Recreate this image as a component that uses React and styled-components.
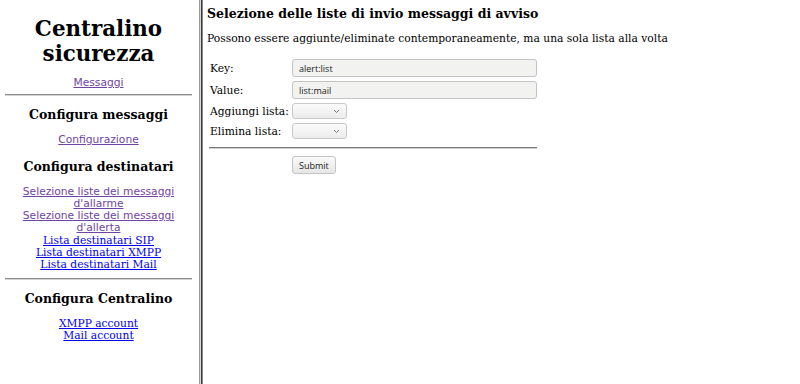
import React from 'react';
import styled, {createGlobalStyle} from 'styled-components';

const GlobalStyle = createGlobalStyle`
    html, body {
        margin: 0;
        height: 100%;
        background: #fff;
    }
    body {
        font-family: "DejaVu Serif", "Liberation Serif", serif;
        font-size: 10.7px;
        color: #000;
    }
`;

const Page = styled.div`
    display: flex;
    height: 384px;
    overflow: hidden;
`;

const Sidebar = styled.nav`
    width: 198px;
    flex: none;
    box-sizing: border-box;
    padding: 0 6px 0 5px;
    text-align: center;
`;

const FrameBorder = styled.div`
    width: 6px;
    flex: none;
    background: linear-gradient(
        to right,
        #ffffff 0 1px,
        #9a9a9a 1px 2px,
        #d8d8d8 2px 3px,
        #3a3a3a 3px 4px,
        #8a8a8a 4px 5px,
        #ffffff 5px 6px
    );
`;

const Title = styled.h1`
    margin: 16px 0 11px;
    font-family: "DejaVu Serif", "Liberation Serif", serif;
    font-size: 21.4px;
    line-height: 25px;
    font-weight: bold;
`;

const SectionTitle = styled.h3`
    margin: ${({$top}) => $top || 12}px 0 12px;
    font-size: 12.5px;
    line-height: 15px;
    font-weight: bold;
`;

const LinkList = styled.div`
    display: flex;
    flex-direction: column;
    align-items: center;
    line-height: 12.3px;
`;

const NavLink = styled.a`
    color: ${({$visited}) => ($visited ? '#6e45a3' : '#0000ee')};
    font-family: ${({$visited}) => ($visited ? '"DejaVu Sans", sans-serif' : '"DejaVu Serif", serif')};
    text-decoration: underline;
    cursor: pointer;
`;

const Rule = styled.hr`
    margin: ${({$top}) => $top || 6}px 0 0;
    border: none;
    border-top: 1px solid #8c8c8c;
    border-bottom: 1px solid #d4d4d4;
    height: 0;
`;

const Main = styled.main`
    flex: 1;
    padding: 0 0 0 3px;
`;

const Heading = styled.h3`
    margin: 6px 0 0;
    font-size: 12.5px;
    line-height: 15px;
    font-weight: bold;
`;

const Intro = styled.p`
    margin: 11px 0 0;
    line-height: 13px;
`;

const Form = styled.form`
    display: grid;
    grid-template-columns: 83px 245px;
    row-gap: 4px;
    align-items: center;
    margin: 14px 0 0 2px;
    width: 330px;
`;

const Label = styled.label`
    padding-left: 1px;
    line-height: 13px;
`;

const TextInput = styled.input`
    box-sizing: border-box;
    height: 18px;
    width: 245px;
    padding: 0 6px;
    border: 1px solid #c4c4c4;
    border-radius: 3px;
    background: #f2f2f1;
    font-family: "Open Sans", sans-serif;
    font-size: 9px;
    color: #222;
`;

const SelectBox = styled.div`
    box-sizing: border-box;
    height: 16px;
    width: 55px;
    border: 1px solid #c8c8c8;
    border-radius: 3px;
    background: linear-gradient(#fbfbfb, #ececec);
    display: flex;
    align-items: center;
    justify-content: flex-end;
    padding-right: 6px;
`;

const Separator = styled.div`
    grid-column: 1 / span 2;
    height: 0;
    border-top: 1px solid #7a7a7a;
    border-bottom: 1px solid #cfcfcf;
    margin: 4px 0 3px;
`;

const Submit = styled.button`
    grid-column: 2;
    justify-self: start;
    box-sizing: border-box;
    height: 18px;
    padding: 0 6px;
    border: 1px solid #c4c4c4;
    border-radius: 3px;
    background: linear-gradient(#fafafa, #e6e6e6);
    font-family: "Open Sans", sans-serif;
    font-size: 9px;
    color: #222;
`;

const Chevron = () => (
    <svg width="7" height="5" viewBox="0 0 7 5">
        <path d="M1 1 L3.5 3.5 L6 1" fill="none" stroke="#777" strokeWidth="1" />
    </svg>
);

const Select = () => (
    <SelectBox>
        <Chevron />
    </SelectBox>
);

export default function App() {
    return (
        <Page>
            <GlobalStyle />
            <Sidebar>
                <Title>Centralino sicurezza</Title>
                <LinkList>
                    <NavLink $visited>Messaggi</NavLink>
                </LinkList>
                <Rule $top={5} />

                <SectionTitle $top={11}>Configura messaggi</SectionTitle>
                <LinkList>
                    <NavLink $visited>Configurazione</NavLink>
                </LinkList>

                <SectionTitle $top={12}>Configura destinatari</SectionTitle>
                <LinkList>
                    <NavLink $visited>Selezione liste dei messaggi d'allarme</NavLink>
                    <NavLink $visited>Selezione liste dei messaggi d'allerta</NavLink>
                    <NavLink>Lista destinatari SIP</NavLink>
                    <NavLink>Lista destinatari XMPP</NavLink>
                    <NavLink>Lista destinatari Mail</NavLink>
                </LinkList>
                <Rule $top={6} />

                <SectionTitle $top={11}>Configura Centralino</SectionTitle>
                <LinkList>
                    <NavLink>XMPP account</NavLink>
                    <NavLink>Mail account</NavLink>
                </LinkList>
            </Sidebar>
            <FrameBorder />
            <Main>
                <Heading>Selezione delle liste di invio messaggi di avviso</Heading>
                <Intro>Possono essere aggiunte/eliminate contemporaneamente, ma una sola lista alla volta</Intro>
                <Form onSubmit={e => e.preventDefault()}>
                    <Label>Key:</Label>
                    <TextInput defaultValue="alert:list" />
                    <Label>Value:</Label>
                    <TextInput defaultValue="list:mail" />
                    <Label>Aggiungi lista:</Label>
                    <Select />
                    <Label>Elimina lista:</Label>
                    <Select />
                    <Separator />
                    <Submit type="submit">Submit</Submit>
                </Form>
            </Main>
        </Page>
    );
}
